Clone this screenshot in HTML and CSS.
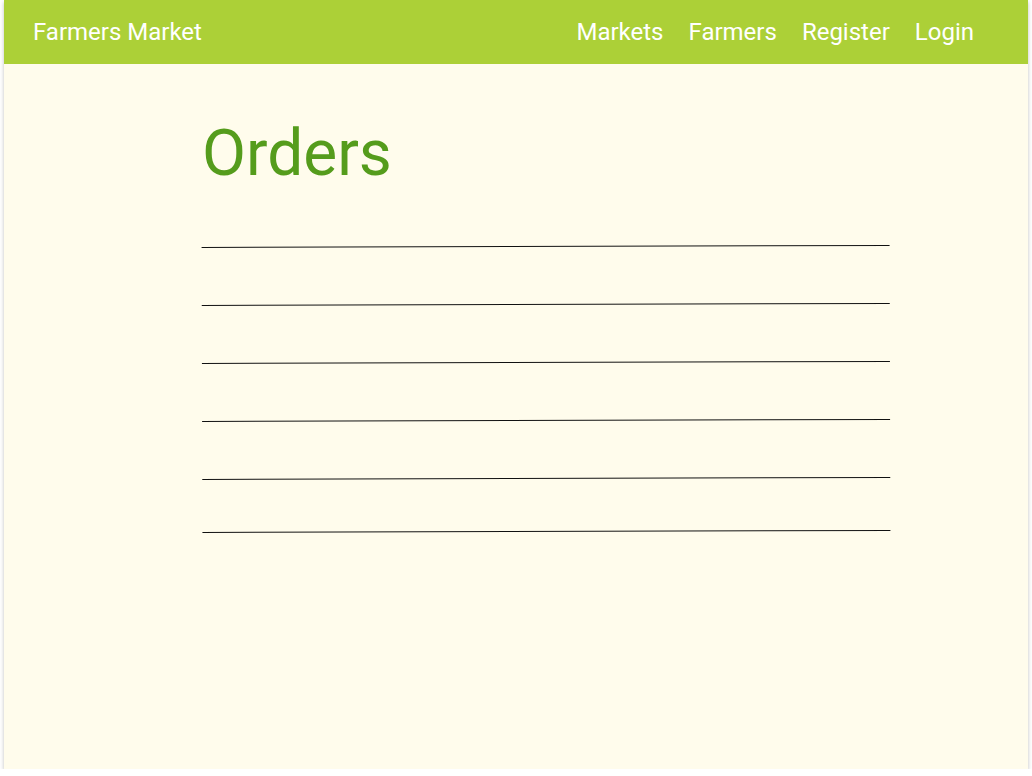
FILE: index.html
```html
<!DOCTYPE html>
<html lang="en">
<head>
<meta charset="utf-8">
<title>Orders - Farmers Market</title>
<link rel="stylesheet" href="styles.css">
</head>
<body>
<div class="frame">
  <header class="topbar">
    <a class="brand" href="#">Farmers Market</a>
    <nav class="nav">
      <a href="#">Markets</a>
      <a href="#">Farmers</a>
      <a href="#">Register</a>
      <a href="#">Login</a>
    </nav>
  </header>
  <main class="content">
    <h1 class="title">Orders</h1>
    <div class="orders">
      <div class="row"></div>
      <div class="row"></div>
      <div class="row"></div>
      <div class="row"></div>
      <div class="row"></div>
      <div class="row last"></div>
    </div>
  </main>
</div>
</body>
</html>
```
FILE: styles.css
```css
html, body {
  margin: 0;
  padding: 0;
  background: #ffffff;
}
body {
  font-family: Roboto, "Noto Sans", Arial, sans-serif;
  padding: 0 4px;
}
.frame {
  width: 1024px;
  height: 769px;
  background: #fffcec;
  box-shadow: 0 2px 4px rgba(0,0,0,0.25);
  display: flex;
  flex-direction: column;
}
.topbar {
  height: 64px;
  background: #acd037;
  display: flex;
  align-items: center;
  justify-content: space-between;
  padding: 0 54px 0 29px;
}
.topbar a {
  color: #ffffff;
  text-decoration: none;
  font-size: 24px;
}
.nav {
  display: flex;
  gap: 25px;
}
.content {
  padding: 0 0 0 198px;
}
.title {
  margin: 52px 0 0 0;
  font-size: 64px;
  font-weight: 400;
  color: #559c1c;
  line-height: 76px;
}
.orders {
  margin-top: 54px;
  width: 688px;
  transform: rotate(-0.167deg);
}
.row {
  height: 57px;
  border-bottom: 1px solid #111111;
}
.row:first-child {
  height: 0;
}
.row.last {
  height: 52px;
}
```
